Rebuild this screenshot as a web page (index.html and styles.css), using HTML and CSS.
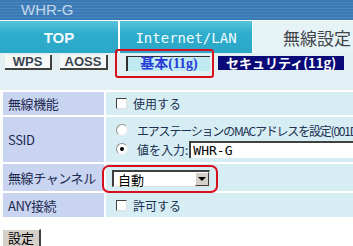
FILE: index.html
```html
<!DOCTYPE html>
<html>

<head>
    <title>WHR-G</title>
    <link rel="stylesheet" href="styles.css">
</head>

<body>
    <div class="page">
        <!-- header -->
        <div class="header">WHR-G</div>

        <!-- main tabs -->
        <div class="tabs">
            <div class="tab tab-top">TOP</div>
            <div class="tab tab-inet">Internet/LAN</div>
            <div class="tab tab-active">無線設定</div>
        </div>

        <!-- sub tabs -->
        <div class="subtabs">
            <span class="sub sub-wps">WPS</span>
            <span class="sub sub-aoss">AOSS</span>
            <span class="sub-mark">
                <span class="sub sub-current">基本(11g)</span>
            </span>
            <span class="sub sub-dark">セキュリティ(11g)</span>
            <span class="sub sub-dark sub-more"></span>
        </div>

        <div class="band"></div>

        <!-- settings -->
        <table class="settings">
            <colgroup>
                <col class="col-label">
                <col>
            </colgroup>
            <tr class="row-1">
                <th>無線機能</th>
                <td><label class="opt"><span class="check"></span>使用する</label></td>
            </tr>
            <tr class="row-2">
                <th>SSID</th>
                <td>
                    <div class="opt opt-mac"><span class="radio"></span>エアステーションのMACアドレスを設定(001D73000000)</div>
                    <div class="opt opt-input"><span class="radio on"></span>値を入力:<span class="textbox">WHR-G</span></div>
                </td>
            </tr>
            <tr class="row-3">
                <th>無線チャンネル</th>
                <td>
                    <span class="select-mark">
                        <span class="select">自動<span class="arrow"></span></span>
                    </span>
                </td>
            </tr>
            <tr class="row-4">
                <th>ANY接続</th>
                <td><label class="opt"><span class="check"></span>許可する</label></td>
            </tr>
        </table>

        <div class="actions">
            <span class="btn">設定</span>
        </div>
    </div>
</body>

</html>
```

FILE: styles.css
```css
html,
body {
    margin: 0;
    padding: 0;
    overflow: hidden;
    background-color: #ffffff;
}

.page {
    width: 460px;
    font-family: "Noto Sans CJK JP", "DejaVu Sans", sans-serif;
    font-size: 13px;
}

/* header */
.header {
    height: 20px;
    box-sizing: border-box;
    padding-left: 21px;
    line-height: 19px;
    font-family: "Liberation Sans", Arial, sans-serif;
    font-size: 15px;
    color: #c4d8ea;
    background-color: #3c7ab6;
    background-image: repeating-linear-gradient(180deg, #3c7ab6 0, #3c7ab6 2px, #4686c0 2px, #4686c0 3px);
}

/* main tabs */
.tabs {
    display: flex;
    height: 32px;
    margin-top: 1px;
    background-color: #ffffff;
}

.tab {
    display: flex;
    align-items: center;
    justify-content: center;
    background: linear-gradient(180deg, #58c4dc 0, #2eaccb 40%, #2ba8c8 100%);
    color: #f2fbff;
}

.tab-top {
    width: 118px;
    font-family: "Liberation Sans", Arial, sans-serif;
    font-size: 15px;
    font-weight: bold;
}

.tab-inet {
    width: 132px;
    margin-left: 2px;
    font-family: "DejaVu Sans Mono", monospace;
    font-size: 14px;
    padding-top: 2px;
    box-sizing: border-box;
}

.tab-active {
    flex: 1;
    margin-left: 1px;
    justify-content: flex-start;
    padding-left: 30px;
    background: #e6f3f6;
    color: #404448;
    font-size: 17px;
}

/* sub tabs */
.subtabs {
    display: flex;
    align-items: center;
    height: 19px;
    background-color: #e2f0f3;
    padding-left: 5px;
}

.sub {
    display: inline-flex;
    align-items: center;
    justify-content: center;
    height: 15px;
    box-sizing: border-box;
    line-height: 1;
}

.sub-wps,
.sub-aoss {
    width: 47px;
    margin-right: 8px;
    background-color: #f6f8f8;
    border-right: 2px solid #404040;
    border-bottom: 2px solid #404040;
    font-family: "Liberation Sans", Arial, sans-serif;
    font-weight: bold;
    font-size: 13px;
    color: #3a4450;
}

.sub-aoss {
    width: 48px;
}

.sub-mark {
    position: relative;
    margin-left: 10px;
    margin-right: 3px;
}

.sub-mark::after {
    content: "";
    position: absolute;
    left: -11px;
    top: -4px;
    width: 95px;
    height: 25px;
    border: 2px solid #d8101c;
    border-radius: 3px;
}

.sub-current {
    width: 84px;
    background-color: #bfeaf2;
    border-left: 2px solid #303030;
    border-top: 1px solid #303030;
    font-family: "Liberation Serif", "Noto Sans CJK JP", serif;
    font-weight: bold;
    font-size: 14px;
    color: #2a3cd8;
}

.sub-dark {
    width: 126px;
    margin-left: 5px;
    background-color: #0a0a78;
    color: #ffffff;
    font-weight: bold;
    font-size: 13px;
    height: 14px;
}

.sub-more {
    width: 20px;
    margin-left: 9px;
}

.band {
    height: 18px;
    background-color: #e2f0f6;
}

/* settings table */
.settings {
    table-layout: fixed;
    border-spacing: 2px;
    margin-left: 1px;
    margin-top: 0;
    width: 458px;
    font-size: 13px;
}

.col-label {
    width: 101px;
}

.settings th {
    padding: 0 0 0 5px;
    text-align: left;
    font-weight: normal;
    white-space: nowrap;
    letter-spacing: -0.4px;
    color: #1c2850;
    background-color: #c8d4f0;
}

.settings td {
    padding: 0 0 0 10px;
    font-size: 12px;
    color: #203050;
    background-color: #d6edf4;
    white-space: nowrap;
}

.row-1 th,
.row-1 td {
    height: 23px;
}

.row-2 th,
.row-2 td {
    height: 45px;
}

.row-3 th,
.row-3 td {
    height: 27px;
}

.row-4 th,
.row-4 td {
    height: 24px;
}

.opt {
    display: flex;
    align-items: center;
    white-space: nowrap;
}

.opt-mac {
    letter-spacing: -1.2px;
}

.opt-input {
    margin-top: 2px;
}

.check {
    flex-shrink: 0;
    width: 9px;
    height: 9px;
    margin-right: 6px;
    background-color: #ffffff;
    border-top: 1px solid #404040;
    border-left: 1px solid #404040;
    border-right: 1px solid #e0e0e0;
    border-bottom: 1px solid #e0e0e0;
}

.radio {
    flex-shrink: 0;
    width: 10px;
    height: 10px;
    margin-right: 9px;
    border-radius: 50%;
    background-color: #ffffff;
    border: 1px solid #909090;
    border-bottom-color: #e8e8e8;
    border-right-color: #e8e8e8;
    position: relative;
}

.radio.on::after {
    content: "";
    position: absolute;
    left: 3px;
    top: 3px;
    width: 4px;
    height: 4px;
    border-radius: 50%;
    background-color: #000000;
}

.textbox {
    flex-shrink: 0;
    display: inline-block;
    width: 240px;
    height: 17px;
    margin-left: 1px;
    box-sizing: border-box;
    padding-left: 2px;
    line-height: 15px;
    background-color: #ffffff;
    border-top: 2px solid #404040;
    border-left: 2px solid #404040;
    font-family: "DejaVu Sans Mono", monospace;
    font-size: 13px;
    color: #000000;
}

/* select with red highlight */
.select-mark {
    position: relative;
    display: inline-block;
    margin-left: -4px;
    vertical-align: middle;
}

.select-mark::before {
    content: "";
    position: absolute;
    left: -10px;
    top: -5px;
    width: 112px;
    height: 24px;
    border: 2px solid #d8101c;
    border-radius: 7px;
}

.select {
    display: flex;
    align-items: center;
    width: 98px;
    height: 17px;
    box-sizing: border-box;
    padding-left: 4px;
    background-color: #ffffff;
    border-top: 2px solid #404040;
    border-left: 2px solid #404040;
    border-right: 1px solid #e0e0e0;
    border-bottom: 1px solid #e0e0e0;
    color: #000000;
    font-size: 13px;
    position: relative;
}

.arrow {
    position: absolute;
    right: 0;
    top: 0;
    width: 14px;
    height: 14px;
    box-sizing: border-box;
    background-color: #d4d0c8;
    border-right: 1px solid #404040;
    border-bottom: 1px solid #404040;
    border-top: 1px solid #ffffff;
    border-left: 1px solid #ffffff;
}

.arrow::after {
    content: "";
    position: absolute;
    left: 2px;
    top: 4px;
    border-left: 4px solid transparent;
    border-right: 4px solid transparent;
    border-top: 4px solid #000000;
}

/* submit */
.actions {
    padding: 9px 0 0 2px;
}

.btn {
    display: inline-block;
    width: 39px;
    height: 18px;
    box-sizing: border-box;
    text-align: center;
    line-height: 15px;
    background-color: #d4d0c8;
    border-right: 2px solid #404040;
    border-bottom: 1px solid #404040;
    border-top: 1px solid #ffffff;
    border-left: 1px solid #ffffff;
    color: #000000;
    font-size: 13px;
}
```
